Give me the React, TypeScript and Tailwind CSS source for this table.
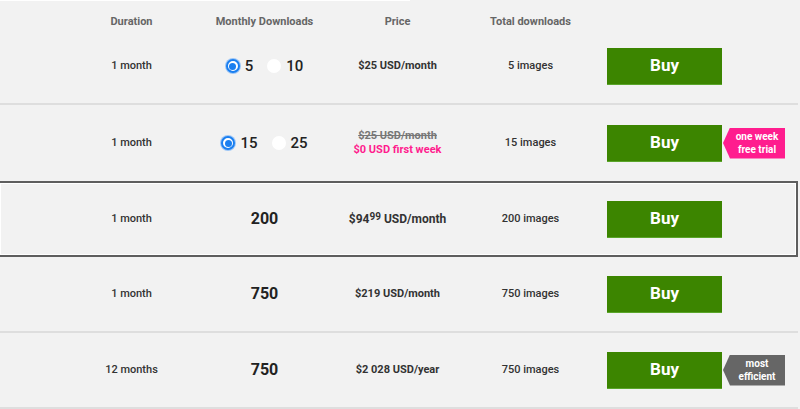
import { ReactNode } from "react";

interface Plan {
  duration: string;
  downloads: ReactNode;
  price: ReactNode;
  total: string;
  badge?: "trial" | "efficient";
  highlighted?: boolean;
}

const Radio = ({ checked, label }: { checked?: boolean; label: string }) => (
  <label className="flex items-center gap-[5px]">
    {checked ? (
      <span className="w-[14px] h-[14px] rounded-full border-2 border-[#1a7ff0] bg-white flex items-center justify-center shadow-[0_0_0_1px_#9cc6f7]">
        <span className="w-[7px] h-[7px] rounded-full bg-[#1a7ff0]" />
      </span>
    ) : (
      <span className="w-[14px] h-[14px] rounded-full bg-white" />
    )}
    <span className="text-[15px] font-medium text-[#222]">{label}</span>
  </label>
);

const RadioGroup = ({ options }: { options: string[] }) => (
  <div className="flex items-center justify-center gap-[14px]">
    {options.map((o, i) => (
      <Radio key={o} label={o} checked={i === 0} />
    ))}
  </div>
);

const Big = ({ children }: { children: ReactNode }) => (
  <span className="text-[16px] font-bold text-[#222]">{children}</span>
);

const Badge = ({ kind }: { kind: "trial" | "efficient" }) => (
  <div
    className={
      "ml-[1px] w-[62px] h-[31px] flex flex-col items-center justify-center pl-[6px] text-white text-[10px] font-bold leading-[13px] [clip-path:polygon(7px_0,100%_0,100%_100%,7px_100%,0_50%)] " +
      (kind === "trial" ? "bg-[#ff1d8e]" : "bg-[#666666]")
    }
  >
    {kind === "trial" ? (
      <>
        <span>one week</span>
        <span>free trial</span>
      </>
    ) : (
      <>
        <span>most</span>
        <span>efficient</span>
      </>
    )}
  </div>
);

const plans: Plan[] = [
  {
    duration: "1 month",
    downloads: <RadioGroup options={["5", "10"]} />,
    price: <span className="font-bold">$25 USD/month</span>,
    total: "5 images",
  },
  {
    duration: "1 month",
    downloads: <RadioGroup options={["15", "25"]} />,
    price: (
      <div className="flex flex-col leading-[14px] font-bold">
        <span className="line-through text-[#777]">$25 USD/month</span>
        <span className="text-[#ff1d8e]">$0 USD first week</span>
      </div>
    ),
    total: "15 images",
    badge: "trial",
  },
  {
    duration: "1 month",
    downloads: <Big>200</Big>,
    price: (
      <span className="font-bold text-[12px]">
        $94<sup className="text-[10px] relative -top-[3px]">99</sup> USD/month
      </span>
    ),
    total: "200 images",
    highlighted: true,
  },
  {
    duration: "1 month",
    downloads: <Big>750</Big>,
    price: <span className="font-bold">$219 USD/month</span>,
    total: "750 images",
  },
  {
    duration: "12 months",
    downloads: <Big>750</Big>,
    price: <span className="font-bold">$2 028 USD/year</span>,
    total: "750 images",
    badge: "efficient",
  },
];

const Row = ({ plan, nextHighlighted }: { plan: Plan; nextHighlighted: boolean }) => {
  const border = plan.highlighted
    ? "h-[76px] border-2 border-l-0 border-[#5e5e5e] shadow-[inset_0_0_0_1px_#ffffff]"
    : nextHighlighted
    ? "h-[76px]"
    : "h-[76px] border-b-2 border-[#dedede]";
  return (
    <div className={"w-[798px] flex items-center text-[11px] text-[#333] " + border}>
      <div className="w-[65px] shrink-0" />
      <div className="w-[133px] text-center font-medium">{plan.duration}</div>
      <div className="w-[133px] flex justify-center">{plan.downloads}</div>
      <div className="w-[133px] flex justify-center text-center">{plan.price}</div>
      <div className="w-[133px] text-center font-medium">{plan.total}</div>
      <div className="w-[10px] shrink-0" />
      <button className="w-[115px] h-[37px] bg-[#3c8500] border-b border-[#5aa52a] text-white text-[17px] font-bold">
        Buy
      </button>
      {plan.badge && <Badge kind={plan.badge} />}
    </div>
  );
};

export default function App() {
  return (
    <div className="w-[800px] h-[409px] bg-[#f2f2f2] overflow-hidden font-['Roboto',sans-serif]">
      <div className="h-[1px] w-[410px] bg-white" />
      <div className="h-[28px] flex pt-[14px] leading-[14px] text-[11px] font-bold text-[#666]">
        <div className="w-[65px] shrink-0" />
        <div className="w-[133px] text-center">Duration</div>
        <div className="w-[133px] text-center">Monthly Downloads</div>
        <div className="w-[133px] text-center">Price</div>
        <div className="w-[133px] text-center">Total downloads</div>
      </div>
      {plans.map((p, i) => (
        <Row key={i} plan={p} nextHighlighted={!!plans[i + 1]?.highlighted} />
      ))}
    </div>
  );
}
